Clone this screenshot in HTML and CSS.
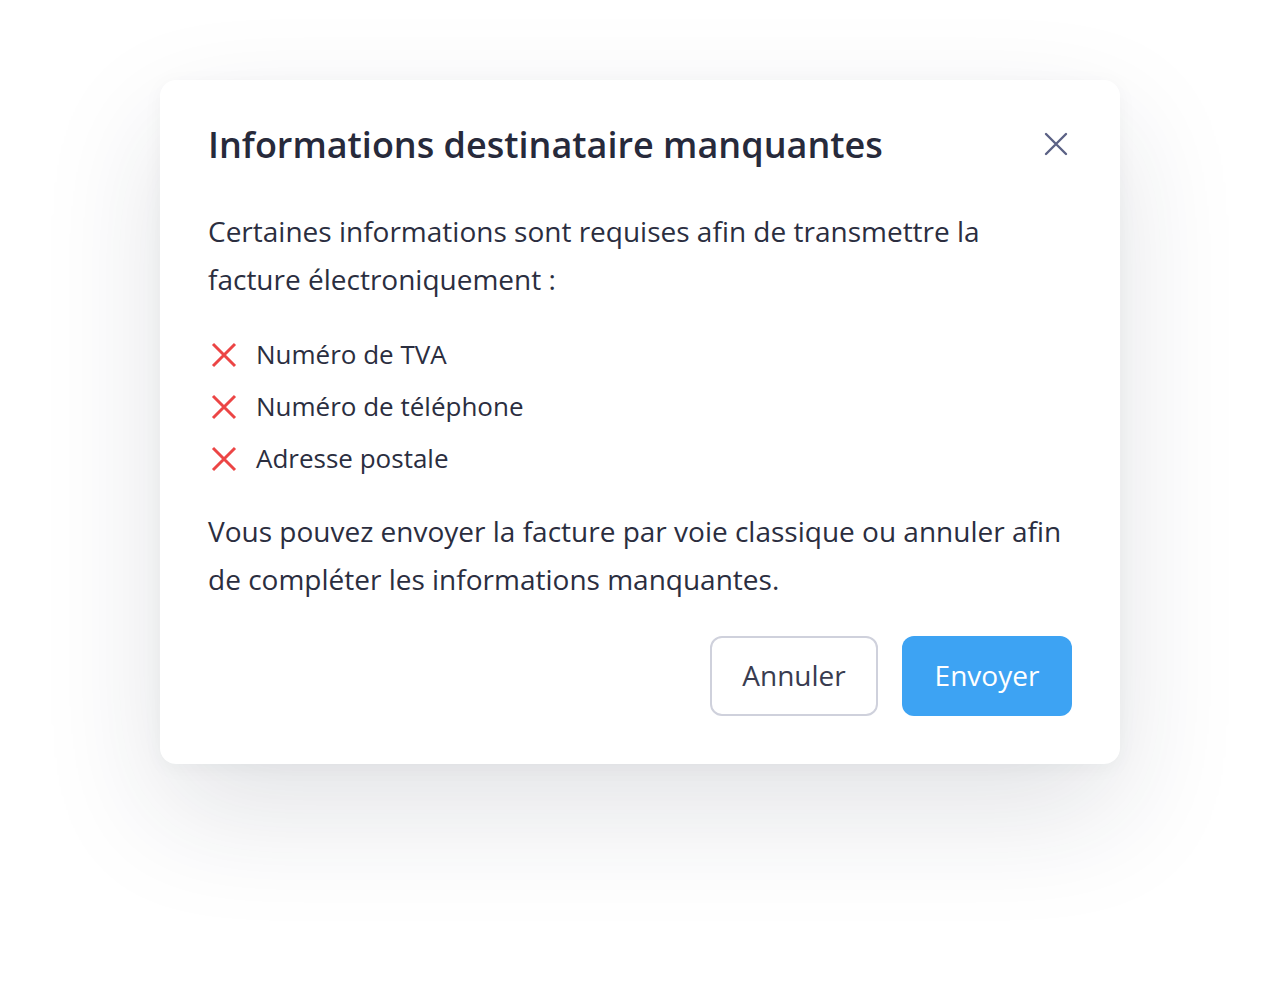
FILE: index.html
```html
<!DOCTYPE html>
<html lang="fr">
<head>
<meta charset="utf-8">
<link rel="stylesheet" href="styles.css">
</head>
<body>
<div class="page">
  <div class="modal">
    <div class="header">
      <h1 class="title">Informations destinataire manquantes</h1>
      <button class="close" aria-label="Fermer">
        <svg width="24" height="24" viewBox="0 0 24 24"><path d="M2 2L22 22M22 2L2 22" stroke="#5b6185" stroke-width="2.4" stroke-linecap="round"/></svg>
      </button>
    </div>
    <p class="text intro">Certaines informations sont requises afin de transmettre la facture électroniquement :</p>
    <ul class="list">
      <li class="item"><svg class="xicon" width="26" height="26" viewBox="0 0 26 26"><path d="M2 2L24 24M24 2L2 24" stroke="#ec4545" stroke-width="3"/></svg><span>Numéro de TVA</span></li>
      <li class="item"><svg class="xicon" width="26" height="26" viewBox="0 0 26 26"><path d="M2 2L24 24M24 2L2 24" stroke="#ec4545" stroke-width="3"/></svg><span>Numéro de téléphone</span></li>
      <li class="item"><svg class="xicon" width="26" height="26" viewBox="0 0 26 26"><path d="M2 2L24 24M24 2L2 24" stroke="#ec4545" stroke-width="3"/></svg><span>Adresse postale</span></li>
    </ul>
    <p class="text outro">Vous pouvez envoyer la facture par voie classique ou annuler afin de compléter les informations manquantes.</p>
    <div class="actions">
      <button class="btn btn-secondary">Annuler</button>
      <button class="btn btn-primary">Envoyer</button>
    </div>
  </div>
</div>
</body>
</html>
```
FILE: styles.css
```css
* { box-sizing: border-box; }
html, body { margin: 0; padding: 0; background: #ffffff; }
body {
  font-family: "Open Sans", "Noto Sans", sans-serif;
  color: #2b2e3f;
  width: 1280px;
  height: 1004px;
  overflow: hidden;
}
.page {
  padding: 80px 160px;
}
.modal {
  width: 960px;
  background: #fff;
  border-radius: 16px;
  padding: 41px 48px 48px 48px;
  box-shadow: 0 48px 120px rgba(30, 40, 60, 0.13), 0 4px 20px rgba(30, 40, 60, 0.04);
}
.header {
  display: flex;
  align-items: center;
  justify-content: space-between;
}
.title {
  margin: 0;
  font-size: 36px;
  font-weight: 600;
  line-height: 48px;
  color: #272a3b;
  letter-spacing: 0;
}
.close {
  border: 0;
  background: none;
  padding: 0;
  margin-right: 4px;
  margin-top: -2px;
  width: 24px;
  height: 24px;
  display: flex;
}
.text {
  margin: 0;
  font-size: 28px;
  line-height: 48px;
}
.intro { margin-top: 38px; }
.list {
  list-style: none;
  margin: 32px 0 0 0;
  padding: 0;
  display: flex;
  flex-direction: column;
  gap: 14px;
}
.item {
  display: flex;
  align-items: center;
  gap: 19px;
  font-size: 26px;
  line-height: 38px;
  height: 38px;
}
.xicon { margin-left: 3px; flex: none; margin-top: 1px; }
.outro { margin-top: 30px; }
.actions {
  display: flex;
  justify-content: flex-end;
  gap: 24px;
  margin-top: 33px;
}
.btn {
  font-family: inherit;
  font-size: 28px;
  height: 80px;
  padding: 0 0 2px 0;
  border-radius: 12px;
  cursor: pointer;
}
.btn-secondary {
  width: 168px;
  background: #fff;
  border: 2px solid #cfd1dc;
  color: #393c50;
}
.btn-primary {
  width: 170px;
  background: #3da3f3;
  border: 0;
  color: #fff;
}
```
